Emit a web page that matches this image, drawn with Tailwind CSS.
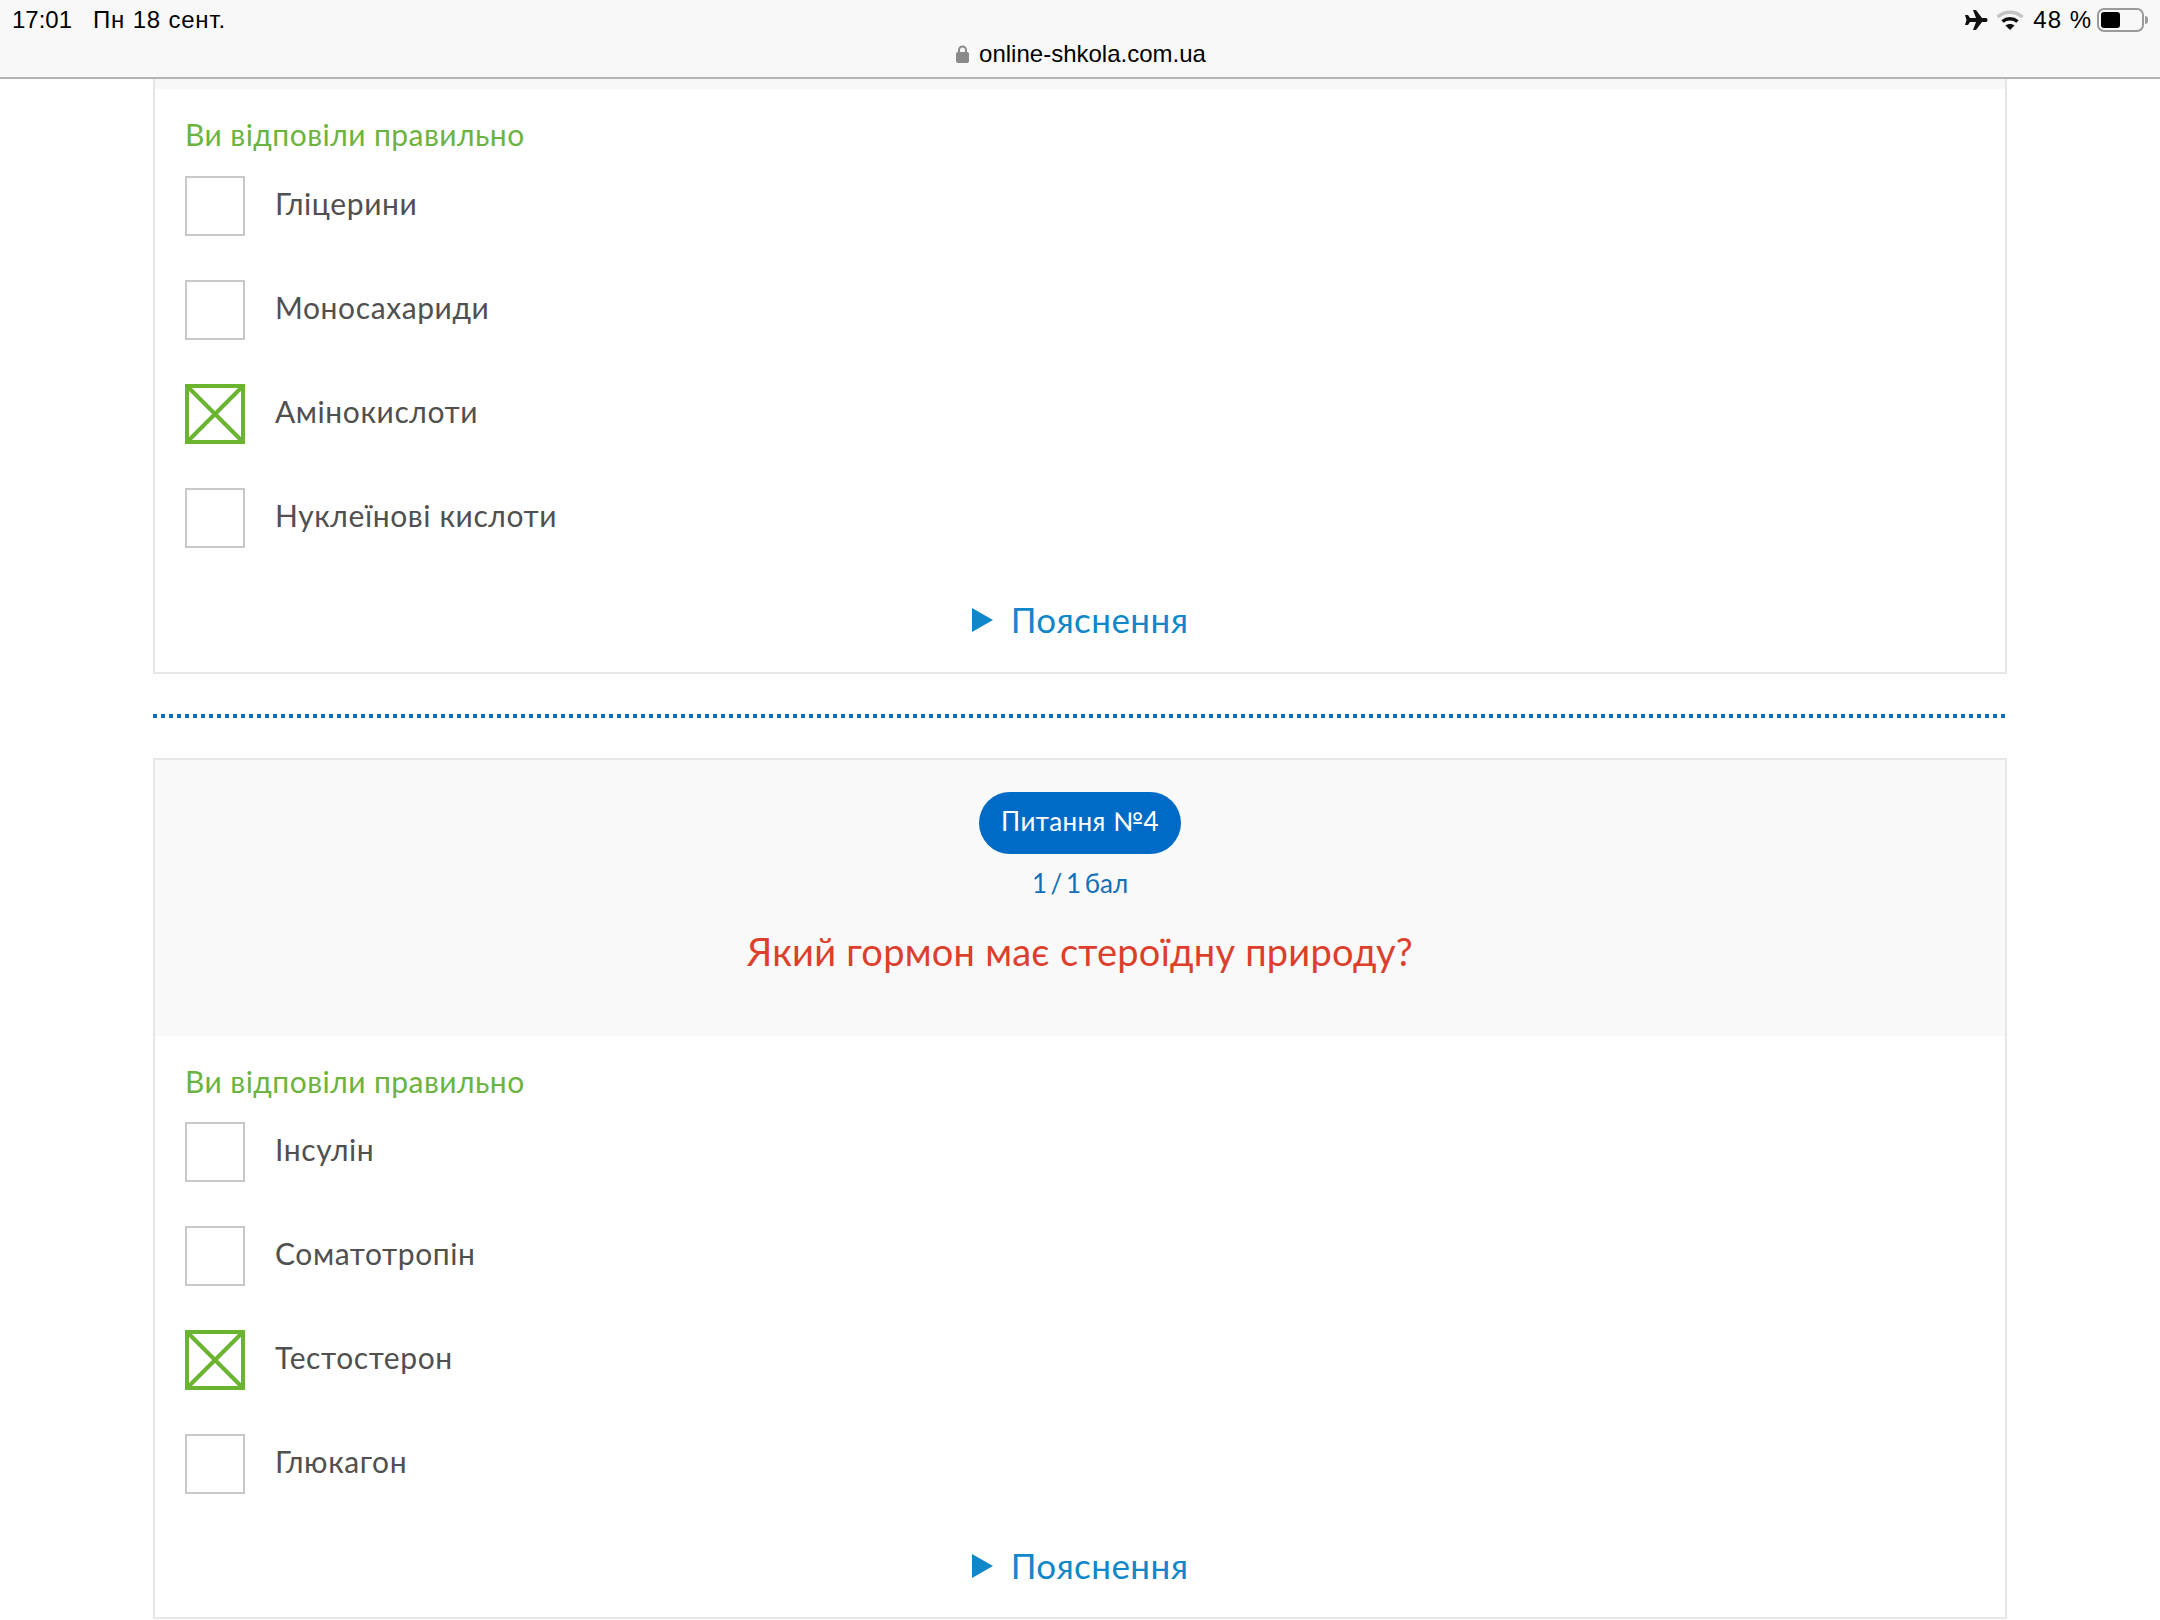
<!DOCTYPE html>
<html lang="uk"><head><meta charset="utf-8"><script src="https://cdn.jsdelivr.net/npm/@tailwindcss/browser@4"></script></head>
<body class="bg-white overflow-hidden font-['Lato','Noto_Sans',sans-serif]">
<div class="w-[2160px] h-[1620px] overflow-hidden">
<header class="relative h-[79px] bg-[#f8f8f8] border-b-2 border-[#b4b4b4] text-black font-['Liberation_Sans',sans-serif]">
  <div class="flex justify-between pl-[12px] pr-[12px] pt-[6px] h-[36px] text-[24px] leading-[28px]">
    <div class="flex gap-[21px]"><span>17:01</span><span class="tracking-[0.8px]">Пн 18 сент.</span></div>
    <div class="flex items-center gap-[8px] h-[28px]">
      <svg class="w-[24px] h-[22px]" viewBox="0 0 24 22"><path fill="#111" d="M9 1h3l6 8h4c2 0 2 4 0 4h-4l-6 8H9l3-8H6l-2 3H1l1.500-5L1 6h3l2 3h6z"/></svg>
      <svg class="w-[28px] h-[22px]" viewBox="0 0 28 22"><path fill="none" stroke="#c4c4c4" stroke-width="3.500" d="M1.500 8C9 1.500 19 1.500 26.500 8"/><path fill="none" stroke="#111" stroke-width="3.500" d="M6.500 12.500c4.500-3.800 10.500-3.800 15 0"/><path fill="#111" d="M9.500 16.500c2.600-2 6.400-2 9 0L14 21z"/></svg>
      <span class="ml-[1px] tracking-[1px]">48 %</span>
      <div class="flex items-center ml-[-3px]">
        <div class="w-[47px] h-[24px] rounded-[7px] border-2 border-[#9a9a9a] p-[2px] bg-transparent"><div class="w-[19px] h-full rounded-[3px] bg-black"></div></div>
        <div class="w-[3px] h-[8px] rounded-r-full bg-[#9a9a9a] ml-[1px]"></div>
      </div>
    </div>
  </div>
  <div class="flex justify-center items-center gap-[10px] h-[36px] text-[24px] leading-[28px] pl-[2px]">
    <svg class="w-[13px] h-[18px]" viewBox="0 0 13 18"><path fill="none" stroke="#8a8a8a" stroke-width="2" d="M3 8V5a3.500 3.500 0 0 1 7 0v3"/><rect y="7" width="13" height="11" rx="2" fill="#8a8a8a"/></svg>
    <span>online-shkola.com.ua</span>
  </div>
</header>

<main class="mx-[153px] w-[1854px]">
  <section class="border-x-2 border-b-2 border-[#e6e6e6] h-[595px]">
    <div class="h-[10px] bg-[#f8f8f8]"></div>
    <div class="px-[30px] pt-[26px]">
      <p class="text-[30px] leading-[38px] tracking-[0.45px] text-[#6cb33f] mb-[23px]">Ви відповіли правильно</p>
      <div class="flex flex-col gap-[44px]">
        <label class="flex items-center gap-[30px] h-[60px] text-[30px] tracking-[0.6px] text-[#505050]"><span class="w-[60px] h-[60px] border-2 border-[#c8c8c8]"></span><span class="pb-[6px]">Гліцерини</span></label>
        <label class="flex items-center gap-[30px] h-[60px] text-[30px] tracking-[0.6px] text-[#505050]"><span class="w-[60px] h-[60px] border-2 border-[#c8c8c8]"></span><span class="pb-[6px]">Моносахариди</span></label>
        <label class="flex items-center gap-[30px] h-[60px] text-[30px] tracking-[0.6px] text-[#505050]"><svg class="w-[60px] h-[60px]" viewBox="0 0 60 60"><path fill="none" stroke="#6ab42f" stroke-width="4" d="M3 3l54 54M57 3L3 57"/><rect x="2" y="2" width="56" height="56" fill="none" stroke="#6ab42f" stroke-width="4"/></svg><span class="pb-[6px]">Амінокислоти</span></label>
        <label class="flex items-center gap-[30px] h-[60px] text-[30px] tracking-[0.6px] text-[#505050]"><span class="w-[60px] h-[60px] border-2 border-[#c8c8c8]"></span><span class="pb-[6px]">Нуклеїнові кислоти</span></label>
      </div>
      <div class="flex justify-center items-center gap-[18px] mt-[41px] h-[60px] text-[35px] tracking-[0.45px] text-[#0f87c9]"><svg class="w-[21px] h-[24px] mt-[1px]" viewBox="0 0 21 24"><path fill="#0f87c9" d="M0 0l21 12L0 24z"/></svg><span>Пояснення</span></div>
    </div>
  </section>

  <div class="h-[4px] mt-[40px] mb-[40px] mr-[-1px] bg-[linear-gradient(90deg,#0f6db5_4px,transparent_4px)] bg-[length:8px_4px]"></div>

  <section class="border-2 border-[#e6e6e6] h-[861px]">
    <div class="h-[276px] bg-[#f9f9f9] flex flex-col items-center pt-[32px]">
      <div class="w-[202px] h-[62px] pb-[3px] rounded-full bg-[#006bc6] text-white text-[26px] tracking-[0.4px] flex items-center justify-center">Питання №4</div>
      <p class="mt-[11px] text-[#1070b8] text-[26px] leading-[36px] [word-spacing:-3px]">1 / 1 бал</p>
      <h2 class="mt-[26px] text-[38px] leading-[48px] tracking-[0.25px] text-[#dc3f2b]">Який гормон має стероїдну природу?</h2>
    </div>
    <div class="px-[30px] pt-[26px]">
      <p class="text-[30px] leading-[38px] tracking-[0.45px] text-[#6cb33f] mb-[22px]">Ви відповіли правильно</p>
      <div class="flex flex-col gap-[44px]">
        <label class="flex items-center gap-[30px] h-[60px] text-[30px] tracking-[0.6px] text-[#505050]"><span class="w-[60px] h-[60px] border-2 border-[#c8c8c8]"></span><span class="pb-[6px]">Інсулін</span></label>
        <label class="flex items-center gap-[30px] h-[60px] text-[30px] tracking-[0.6px] text-[#505050]"><span class="w-[60px] h-[60px] border-2 border-[#c8c8c8]"></span><span class="pb-[6px]">Соматотропін</span></label>
        <label class="flex items-center gap-[30px] h-[60px] text-[30px] tracking-[0.6px] text-[#505050]"><svg class="w-[60px] h-[60px]" viewBox="0 0 60 60"><path fill="none" stroke="#6ab42f" stroke-width="4" d="M3 3l54 54M57 3L3 57"/><rect x="2" y="2" width="56" height="56" fill="none" stroke="#6ab42f" stroke-width="4"/></svg><span class="pb-[6px]">Тестостерон</span></label>
        <label class="flex items-center gap-[30px] h-[60px] text-[30px] tracking-[0.6px] text-[#505050]"><span class="w-[60px] h-[60px] border-2 border-[#c8c8c8]"></span><span class="pb-[6px]">Глюкагон</span></label>
      </div>
      <div class="flex justify-center items-center gap-[18px] mt-[41px] h-[60px] text-[35px] tracking-[0.45px] text-[#0f87c9]"><svg class="w-[21px] h-[24px] mt-[1px]" viewBox="0 0 21 24"><path fill="#0f87c9" d="M0 0l21 12L0 24z"/></svg><span>Пояснення</span></div>
    </div>
  </section>
</main>
</div>
</body></html>
